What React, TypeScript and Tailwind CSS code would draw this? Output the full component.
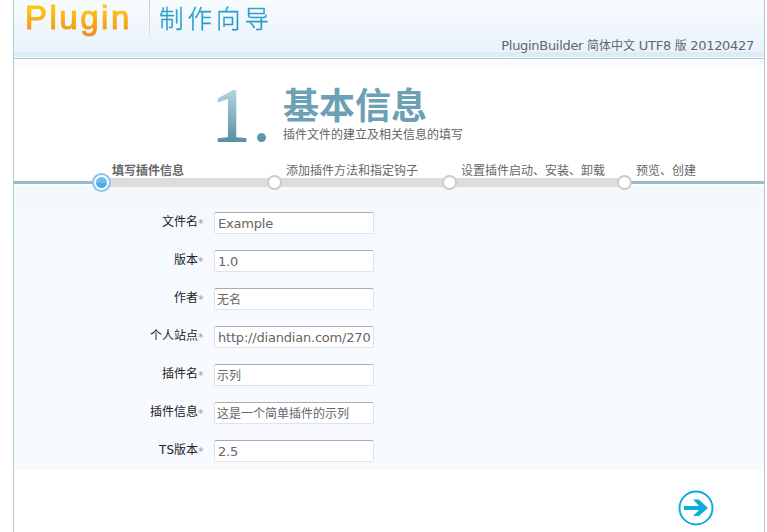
const steps = [
  { label: '填写插件信息', active: true, width: 'w-[173px]' },
  { label: '添加插件方法和指定钩子', active: false, width: 'w-[175px]' },
  { label: '设置插件启动、安装、卸载', active: false, width: 'w-[175px]' },
  { label: '预览、创建', active: false, width: 'w-[128px]' },
];

const fields = [
  { label: '文件名', value: 'Example', cjk: false },
  { label: '版本', value: '1.0', cjk: false },
  { label: '作者', value: '无名', cjk: true },
  { label: '个人站点', value: 'http://diandian.com/270', cjk: false },
  { label: '插件名', value: '示列', cjk: true },
  { label: '插件信息', value: '这是一个简单插件的示列', cjk: true },
  { label: 'TS版本', value: '2.5', cjk: false },
];

function Header() {
  return (
    <header className="flex h-[59px] shrink-0 justify-between border-b border-[#a6c8d6] bg-[linear-gradient(to_bottom,#f8fbfe_0px,#e8f3fb_52px,#daecf6_52px,#dcedf6_57px,#ffffff_57px)]">
      <div className="flex">
        <div className="ml-[11px] h-[42px] w-[124px] bg-linear-to-b from-[#fdc60b] from-20% to-[#f08a1c] to-85% bg-clip-text font-['Liberation_Sans',sans-serif] text-[33px] leading-[36px] tracking-[2.5px] text-transparent [-webkit-text-stroke:1px_transparent]">
          Plugin
        </div>
        <div className="h-9 w-px bg-linear-to-b from-[#bccbd2] to-[#e0e6dc]" />
        <div className="ml-[9px] h-10 bg-linear-to-b from-[#31a9d2] to-[#168fc4] bg-clip-text font-['Noto_Sans_CJK_SC',sans-serif] text-[24.5px] font-light leading-[35px] tracking-[4px] text-transparent [-webkit-text-stroke:0.4px_transparent]">
          制作向导
        </div>
      </div>
      <div className="mr-[10px] mt-[38px] whitespace-nowrap text-[13px] leading-4 tracking-[-0.3px] text-[#666]">
        PluginBuilder <span className="text-[12px] tracking-normal">简体中文</span> UTF8 <span className="text-[12px]">版</span> 20120427
      </div>
    </header>
  );
}

function Intro() {
  return (
    <section className="flex h-[103px] shrink-0 bg-[linear-gradient(to_bottom,#ffffff_2px,#f5faff_2px,#ffffff_13px)]">
      <div className="ml-[198px] mt-[20px] flex h-[72px] w-[71px] font-['Liberation_Serif',serif] text-[76px] leading-[72px] text-transparent">
        <span className="mr-[2px] w-[38px] bg-linear-to-b from-[#b5d3df] from-15% to-[#528ea2] to-90% bg-clip-text [-webkit-text-stroke:2px_transparent]">1</span>
        <span className="bg-linear-to-b from-[#b5d3df] from-15% to-[#528ea2] to-90% bg-clip-text">.</span>
      </div>
      <div className="pt-[27px]">
        <h1 className="h-[41px] text-[36px] font-bold leading-[42px] text-[#6ca0b4]">基本信息</h1>
        <p className="text-[12px] leading-4 text-[#666]">插件文件的建立及相关信息的填写</p>
      </div>
    </section>
  );
}

function StepBar() {
  return (
    <nav className="relative flex h-[25px] shrink-0 bg-[linear-gradient(to_bottom,#fff_19px,#9bb9c9_19px,#9bb9c9_22px,#fff_22px,#fff_24px,#f2f8fc_24px)] pl-[87px]">
      <div className="absolute left-[87px] top-4 h-[9px] w-[524px] bg-[#dcdcdc]" />
      {steps.map((step) => (
        <div key={step.label} className={`relative shrink-0 ${step.width}`}>
          <span className={`block whitespace-nowrap text-[12px] leading-[18px] text-[#666] ${step.active ? 'pl-[11px] font-bold' : 'pl-[12px]'}`}>
            {step.label}
          </span>
          {step.active ? (
            <i className="absolute -left-[9px] top-[11px] size-[19px] rounded-full border-2 border-[#86c5ef] bg-white p-[2px]">
              <i className="block size-[11px] rounded-full bg-linear-to-b from-[#71baed] from-50% to-[#49aae8] to-50%" />
            </i>
          ) : (
            <i className="absolute -left-[7px] top-[13px] size-[15px] rounded-full border-2 border-[#cbcbcb] bg-white" />
          )}
        </div>
      ))}
    </nav>
  );
}

function PluginForm() {
  return (
    <form className="flex h-[283px] shrink-0 flex-col gap-4 bg-linear-to-b from-[#f2f8fc] to-[#f7fbff] to-35% pt-[25px]">
      {fields.map((field) => (
        <label key={field.label} className="flex h-[22px] shrink-0">
          <span className="flex w-[190px] justify-end text-[12px] leading-[21px] text-[#222]">
            <span>{field.label}</span>
            <span className="w-[6px] text-[11px] leading-[23px] text-[#999]">*</span>
          </span>
          <input
            readOnly
            value={field.value}
            className={`ml-[10px] h-[22px] w-[160px] rounded-[2px] border border-[#dfe2e8] border-t-[#a9abb2] bg-white text-[#666] outline-none ${field.cjk ? 'pb-px pl-[2px] text-[12px]' : 'pl-[3px] text-[13px] tracking-[-0.2px]'}`}
          />
        </label>
      ))}
    </form>
  );
}

export default function App() {
  return (
    <div className="h-[532px] w-[767px] overflow-hidden bg-white pl-[13px] font-['DejaVu_Sans','Noto_Sans_CJK_SC',sans-serif]">
      <main className="flex h-full w-[752px] flex-col border-x border-[#b0cbd4]">
        <Header />
        <Intro />
        <StepBar />
        <PluginForm />
        <div className="flex justify-end pr-[50px] pt-[20px]">
          <button aria-label="下一步">
            <svg width="36" height="36" viewBox="0 0 36 36" fill="none">
              <circle cx="18" cy="18" r="16.5" stroke="#0badd9" strokeWidth="2" />
              <path d="M6 16H21L15 9.5H21L30 18L21 26H15L21 20H6Z" fill="#0badd9" />
            </svg>
          </button>
        </div>
      </main>
    </div>
  );
}
